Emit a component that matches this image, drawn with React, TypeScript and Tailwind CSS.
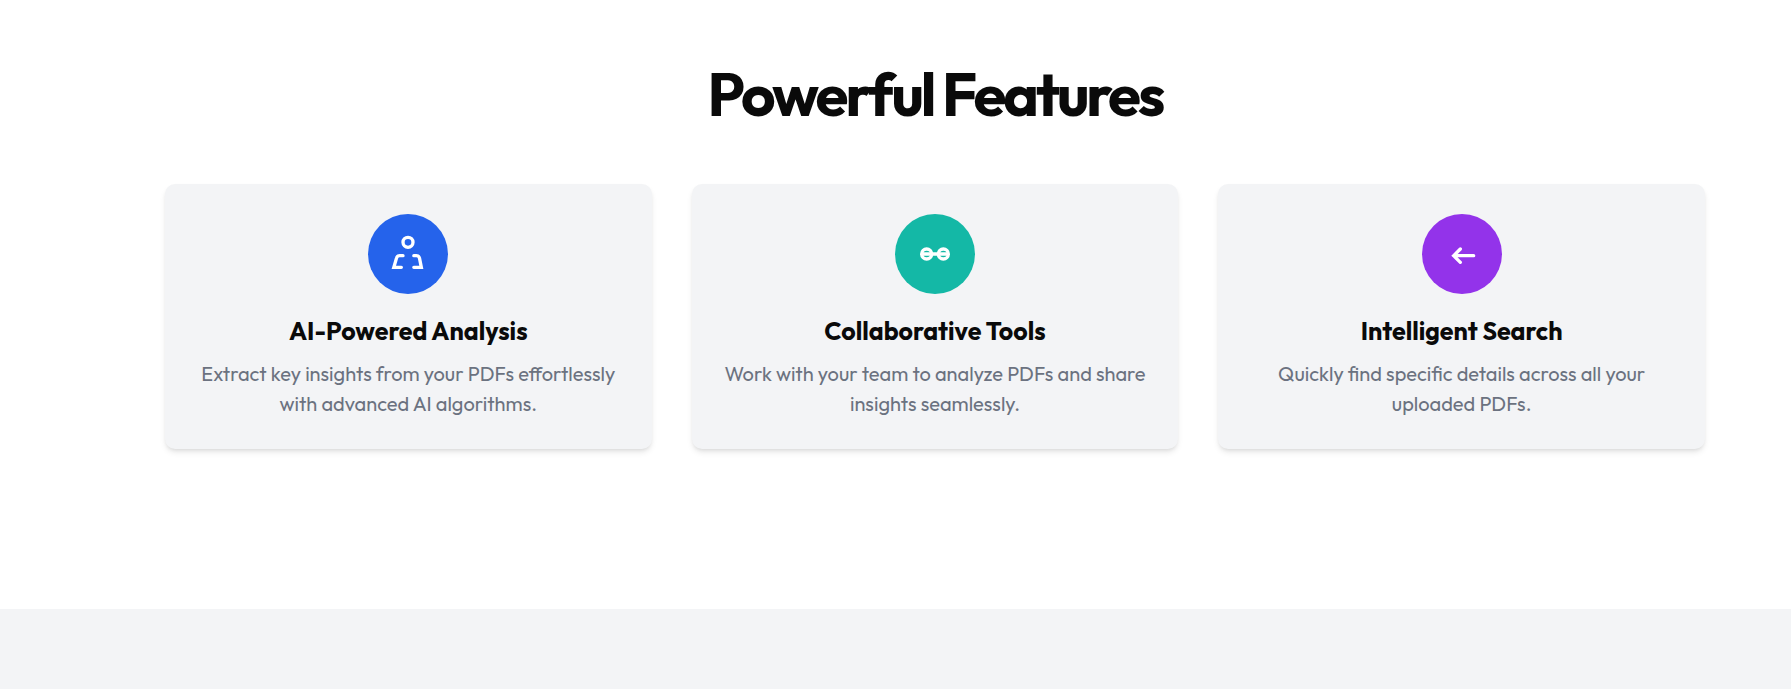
import type { ReactNode } from "react";

type Feature = {
  title: string;
  text: string;
  color: string;
  icon: ReactNode;
};

const features: Feature[] = [
  {
    title: "AI-Powered Analysis",
    text: "Extract key insights from your PDFs effortlessly with advanced AI algorithms.",
    color: "bg-[#2563eb]",
    icon: (
      <>
        <circle cx="12" cy="5" r="3" />
        <path d="M9 13H7a2 2 0 0 0-1.9 1.5L3.5 20H8" />
        <path d="M15.5 13H17a2 2 0 0 1 1.9 1.5L20 20h-4.5" />
      </>
    ),
  },
  {
    title: "Collaborative Tools",
    text: "Work with your team to analyze PDFs and share insights seamlessly.",
    color: "bg-[#14b8a6]",
    icon: (
      <>
        <circle cx="7" cy="12" r="3" />
        <circle cx="17" cy="12" r="3" />
        <path d="M4.5 12h15" />
      </>
    ),
  },
  {
    title: "Intelligent Search",
    text: "Quickly find specific details across all your uploaded PDFs.",
    color: "bg-[#9333ea]",
    icon: <path d="M11 9l-4 4 4 4M7 13h12" />,
  },
];

function FeatureCard({ title, text, color, icon }: Feature) {
  return (
    <article className="flex flex-col items-center rounded-[10px] bg-[#f3f4f6] p-[30px] text-center shadow-md">
      <div className={`mb-5 flex size-20 items-center justify-center rounded-full text-white ${color}`}>
        <svg
          className="size-10"
          viewBox="0 0 24 24"
          fill="none"
          stroke="currentColor"
          strokeWidth="2"
          strokeLinecap="round"
          strokeLinejoin="miter"
          aria-hidden="true"
        >
          {icon}
        </svg>
      </div>
      <h3 className="mb-2.5 text-[25px] leading-[35px] font-bold text-[#0a0a0a]">{title}</h3>
      <p className="text-xl leading-[30px] text-[#6b7280]">{text}</p>
    </article>
  );
}

export default function App() {
  return (
    <main className="min-h-screen bg-[#f3f4f6] font-[Outfit,Lato,sans-serif]">
      <section className="bg-white pt-16 pr-[86px] pb-40 pl-[165px]">
        <h2 className="mb-[60px] text-center text-[60px] leading-[60px] font-bold tracking-tighter text-[#0a0a0a]">
          Powerful Features
        </h2>
        <div className="grid grid-cols-1 gap-10 md:grid-cols-3">
          {features.map((feature) => (
            <FeatureCard key={feature.title} {...feature} />
          ))}
        </div>
      </section>
    </main>
  );
}
